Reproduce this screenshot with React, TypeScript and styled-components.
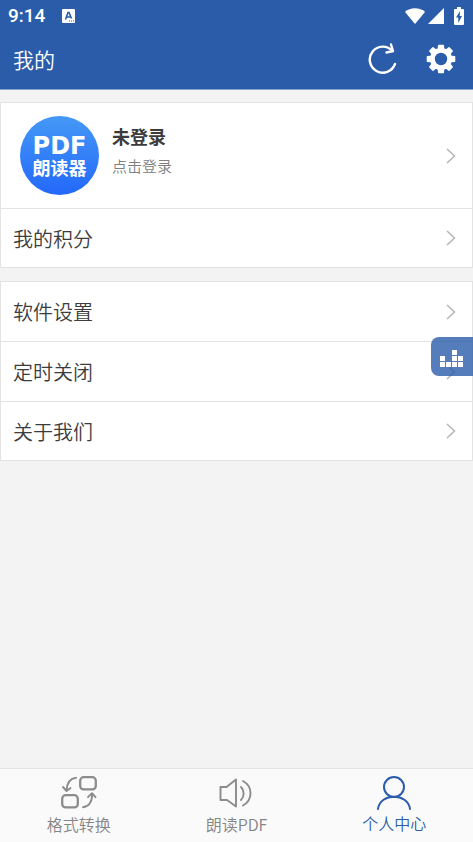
import React from "react";
import styled, { createGlobalStyle } from "styled-components";

const sans = '"Roboto", "Noto Sans CJK SC", sans-serif';
const hanSans = '"Noto Sans CJK SC", sans-serif';
const blue = "#2a5caa";
const line = "#e3e3e3";

const GlobalStyle = createGlobalStyle`
  * { box-sizing: border-box; }
  body { margin: 0; background: #f3f3f3; font-family: ${sans}; font-weight: 350; }
  button { font: inherit; color: inherit; background: none; border: 0; padding: 0; cursor: pointer; }
  svg { display: block; flex: none; }
`;

const Page = styled.div`
  display: flex;
  flex-direction: column;
  min-height: 100vh;
`;

const Header = styled.header`
  background: ${blue};
  color: #fff;
  border-bottom: 1px solid #8aa5d0;
`;

const StatusBar = styled.div`
  display: flex;
  align-items: center;
  height: 32px;
  padding: 0 9px 0 8px;
`;

const Clock = styled.time`
  font-size: 19px;
  font-weight: 500;
  line-height: 32px;
  margin-right: 17px;
`;

const StatusIcons = styled.div`
  display: flex;
  align-items: center;
  gap: 10px;
  margin-left: auto;
`;

const Reception = styled.div`
  display: flex;
  align-items: center;
  gap: 3px;
`;

const TitleBar = styled.div`
  display: flex;
  align-items: center;
  justify-content: space-between;
  height: 57px;
  padding: 0 17px 0 13px;
`;

const Title = styled.h1`
  margin: 0;
  font-size: 21px;
  font-weight: 350;
  line-height: 32px;
`;

const Actions = styled.div`
  display: flex;
  align-items: center;
  gap: 29px;
  padding-bottom: 4px;
`;

const Main = styled.main`
  flex: 1;
  display: flex;
  flex-direction: column;
  gap: 13px;
  padding: 12px 0;
`;

const Group = styled.section`
  background: #fff;
  border: 1px solid ${line};
`;

const Row = styled.button`
  display: flex;
  align-items: center;
  width: 100%;
  height: 59px;
  color: #3c3c3c;
  font-size: 20px;
  line-height: 30px;
  text-align: left;

  && { padding: 0 16px 0 12px; }
  & + & {
    height: 60px;
    border-top: 1px solid ${line};
  }
  & + &:last-child { height: 59px; }
`;

const ProfileRow = styled(Row)`
  height: 105px;
  && { padding-left: 19px; }
`;

const Label = styled.span`
  flex: 1;
  padding-top: 3px;
`;

const Avatar = styled.span`
  display: flex;
  flex-direction: column;
  align-items: center;
  justify-content: center;
  width: 79px;
  height: 79px;
  margin-right: 13px;
  border-radius: 50%;
  background: linear-gradient(#4598f6, #2368fa);
  color: #fff;
  font-weight: 700;
  white-space: nowrap;
`;

const LogoLatin = styled.span`
  font-family: "DejaVu Sans", sans-serif;
  font-size: 24px;
  line-height: 22px;
`;

const LogoHan = styled.span`
  font-family: ${hanSans};
  font-size: 18px;
  font-weight: 700;
  line-height: 20px;
`;

const Account = styled.span`
  flex: 1;
  display: flex;
  flex-direction: column;
  padding-bottom: 8px;
`;

const Name = styled.strong`
  font-size: 18px;
  font-weight: 700;
  line-height: 30px;
`;

const Hint = styled.span`
  color: #808080;
  font-size: 15px;
  line-height: 28px;
`;

const FloatButton = styled.button`
  position: fixed;
  top: 40%;
  right: 0;
  display: flex;
  align-items: center;
  width: 42px;
  height: 39px;
  border-radius: 8px 0 0 8px;
  && {
    padding: 4px 0 0 9px;
    background: rgba(42, 92, 170, 0.8);
  }
`;

const TabBar = styled.nav`
  display: grid;
  grid-template-columns: repeat(3, 1fr);
  height: 74px;
  background: #fafafa;
  border-top: 1px solid ${line};
`;

const Tab = styled.button<{ $active?: boolean }>`
  display: flex;
  flex-direction: column;
  align-items: center;
  gap: ${(p) => (p.$active ? 0 : 3)}px;
  && {
    padding-top: 6px;
    color: ${(p) => (p.$active ? blue : "#858585")};
    font-family: ${hanSans};
    font-size: 16px;
    line-height: 24px;
  }
`;

const Chevron = () => (
  <svg width="10" height="16" viewBox="0 0 10 16" fill="none" stroke="#b5b5b5" strokeWidth="1.5" aria-hidden="true">
    <path d="M1 1l7.5 7L1 15" />
  </svg>
);

const ReaderIcon = () => (
  <svg width="13" height="14" viewBox="0 0 13 14" aria-hidden="true">
    <rect width="13" height="14" rx="1" fill="#fff" />
    <path d="M3.5 10.5L6 3.5h1l2.5 6M4.5 8h4" fill="none" stroke={blue} strokeWidth="1.6" />
    <path d="M7 12h1M9 12h1M11 12h1" stroke={blue} strokeWidth="1" />
  </svg>
);

const WifiIcon = () => (
  <svg width="20" height="16" viewBox="0 0 20 16" fill="#fff" aria-hidden="true">
    <path d="M0 4C5-1 15-1 20 4L10 16z" />
  </svg>
);

const SignalIcon = () => (
  <svg width="16" height="16" viewBox="0 0 16 16" fill="#fff" aria-hidden="true">
    <path d="M16 0v16H0z" />
  </svg>
);

const BatteryIcon = () => (
  <svg width="10" height="18" viewBox="0 0 10 18" aria-hidden="true">
    <path d="M3 0h4v2h2q1 0 1 1v14q0 1-1 1H1q-1 0-1-1V3q0-1 1-1h2z" fill="#fff" />
    <path d="M6 4L2 10.5h2.3V16L8 9H5.7z" fill={blue} />
  </svg>
);

const RefreshIcon = () => (
  <svg width="30" height="32" viewBox="0 0 30 32" fill="none" stroke="#fff" strokeWidth="2.4" strokeLinecap="round" strokeLinejoin="round" aria-hidden="true">
    <path d="M28 21A13 13 0 1 1 25.5 8" />
    <path d="M24 1.5L26 8l-6.5 1.5" />
  </svg>
);

const GearIcon = () => (
  <svg width="30" height="30" viewBox="0 0 30 30" aria-hidden="true">
    <g fill="#fff">
      {[0, 45, 90, 135].map((angle) => (
        <path key={angle} transform={`rotate(${angle} 15 15)`} d="M12 1.4q.1-.7.8-.7h4.4q.7 0 .8.7L18.6 7v16l-.6 5.6q-.1.7-.8.7h-4.400q-.7 0-.8-.7L11.4 23V7z" />
      ))}
      <circle cx="15" cy="15" r="11" />
    </g>
    <circle cx="15" cy="15" r="6.2" fill={blue} />
  </svg>
);

const BarsIcon = () => (
  <svg width="24" height="17" viewBox="0 0 24 17" fill="#fff" aria-hidden="true">
    {[2, 1, 3, 2].flatMap((count, col) =>
      Array.from({ length: count }, (_, i) => (
        <rect key={`${col}-${i}`} x={col * 6} y={12 - i * 6} width="5" height="5" />
      ))
    )}
  </svg>
);

const ConvertIcon = () => (
  <svg width="36" height="34" viewBox="0 0 36 34" fill="none" stroke="#8c8c8c" strokeWidth="2.3" strokeLinecap="round" strokeLinejoin="round" aria-hidden="true">
    <rect x="19.2" y="2.2" width="15.6" height="12.2" rx="3.5" />
    <rect x="1.2" y="20.2" width="15.6" height="12.2" rx="3.5" />
    <path d="M15 2.8C9 3.5 6 8 5.5 15.5M2 12l3.5 4L9.5 13" strokeWidth="1.9" />
    <path d="M22 32.2c6-.7 9-5.2 9.2-13M27 22.2l4-4 3.5 4" strokeWidth="1.9" />
  </svg>
);

const SpeakerIcon = () => (
  <svg width="34" height="34" viewBox="0 0 34 34" fill="none" stroke="#8c8c8c" strokeWidth="1.9" strokeLinecap="round" strokeLinejoin="round" aria-hidden="true">
    <path d="M1.5 12h6L17 4.5v27L8 25H1.5z" />
    <path d="M22 12c3.5 3.3 3.5 9.5 0 13M24 6c10 5.5 10 19 0 24.5" />
  </svg>
);

const PersonIcon = () => (
  <svg width="36" height="36" viewBox="0 0 36 36" fill="none" stroke={blue} strokeWidth="2" strokeLinecap="round" aria-hidden="true">
    <circle cx="18" cy="12" r="10" />
    <path d="M2 34C4 17.5 32 17.5 34 34" />
  </svg>
);

const settings = ["软件设置", "定时关闭", "关于我们"];

function MenuRow({ label }: { label: string }) {
  return (
    <Row type="button">
      <Label>{label}</Label>
      <Chevron />
    </Row>
  );
}

export default function App() {
  return (
    <Page>
      <GlobalStyle />
      <Header>
        <StatusBar>
          <Clock>9:14</Clock>
          <ReaderIcon />
          <StatusIcons>
            <Reception>
              <WifiIcon />
              <SignalIcon />
            </Reception>
            <BatteryIcon />
          </StatusIcons>
        </StatusBar>
        <TitleBar>
          <Title>我的</Title>
          <Actions>
            <button type="button" aria-label="刷新"><RefreshIcon /></button>
            <button type="button" aria-label="设置"><GearIcon /></button>
          </Actions>
        </TitleBar>
      </Header>
      <Main>
        <Group>
          <ProfileRow type="button">
            <Avatar>
              <LogoLatin>PDF</LogoLatin>
              <LogoHan>朗读器</LogoHan>
            </Avatar>
            <Account>
              <Name>未登录</Name>
              <Hint>点击登录</Hint>
            </Account>
            <Chevron />
          </ProfileRow>
          <MenuRow label="我的积分" />
        </Group>
        <Group>
          {settings.map((label) => (
            <MenuRow key={label} label={label} />
          ))}
        </Group>
      </Main>
      <FloatButton type="button" aria-label="统计"><BarsIcon /></FloatButton>
      <TabBar>
        <Tab type="button"><ConvertIcon />格式转换</Tab>
        <Tab type="button"><SpeakerIcon />朗读PDF</Tab>
        <Tab type="button" $active aria-current="page"><PersonIcon />个人中心</Tab>
      </TabBar>
    </Page>
  );
}
